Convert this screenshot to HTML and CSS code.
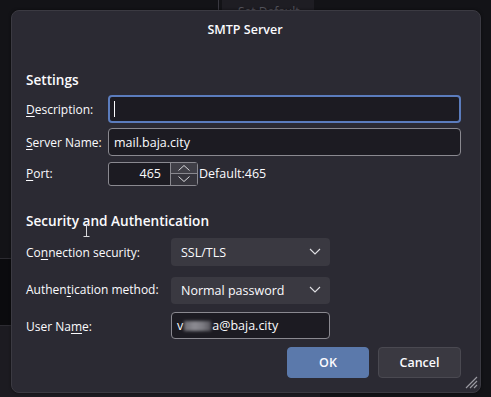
FILE: index.html
```html
<!DOCTYPE html>
<html>
<head>
<meta charset="utf-8">
<link rel="stylesheet" href="styles.css">
</head>
<body>
<div class="backdrop-text">Set Default...</div>
<div class="dialog">
  <div class="title">SMTP Server</div>
  <h2 class="heading settings-h">Settings</h2>
  <div class="grid-settings">
    <label class="lbl"><u>D</u>escription:</label>
    <div class="input focused"><span class="caret"></span></div>
    <label class="lbl"><u>S</u>erver Name:</label>
    <div class="input">mail.baja.city</div>
    <label class="lbl"><u>P</u>ort:</label>
    <div class="port-row">
      <div class="number">
        <span class="num-val">465</span>
        <span class="spin">
          <span class="spin-btn up"><svg width="14" height="8" viewBox="0 0 14 8"><path d="M1.5 6.5 L7 1.5 L12.5 6.5" fill="none" stroke="#d8d8dc" stroke-width="1"/></svg></span>
          <span class="spin-btn down"><svg width="14" height="8" viewBox="0 0 14 8"><path d="M1.5 1.5 L7 6.5 L12.5 1.5" fill="none" stroke="#d8d8dc" stroke-width="1"/></svg></span>
        </span>
      </div>
      <span class="default">Default:465</span>
    </div>
  </div>
  <h2 class="heading security-h">Security and Authentication</h2>
  <div class="grid-security">
    <label class="lbl">Co<u>n</u>nection security:</label>
    <div class="select conn">SSL/TLS<svg class="chev" width="12" height="7" viewBox="0 0 12 7"><path d="M1 1 L6 6 L11 1" fill="none" stroke="#e0e0e4" stroke-width="1.1"/></svg></div>
    <label class="lbl">Authen<u>t</u>ication method:</label>
    <div class="select auth">Normal password<svg class="chev" width="12" height="7" viewBox="0 0 12 7"><path d="M1 1 L6 6 L11 1" fill="none" stroke="#e0e0e4" stroke-width="1.1"/></svg></div>
    <label class="lbl">User Na<u>m</u>e:</label>
    <div class="input user">v<span class="blur"></span>a@baja.city</div>
  </div>
  <div class="buttons">
    <button class="btn ok">OK</button>
    <button class="btn cancel">Cancel</button>
  </div>
  <svg class="grip" width="14" height="14" viewBox="0 0 14 14"><path d="M13 2 L2 13 M13 6 L6 13 M13 10 L10 13" stroke="#9a9aa2" stroke-width="1.2"/></svg>
  <svg class="ibeam" width="7" height="13" viewBox="0 0 7 13"><path d="M0.5 0.5 H6.5 M3.5 0.5 V12.5 M0.5 12.5 H6.5" stroke="#d8d8dc" stroke-width="1" fill="none"/></svg>
</div>
</body>
</html>
```
FILE: styles.css
```css
* { box-sizing: border-box; }
html, body { margin: 0; padding: 0; }
body {
  width: 491px;
  height: 397px;
  overflow: hidden;
  position: relative;
  font-family: "Open Sans", "Noto Sans", sans-serif;
  font-size: 12px;
  color: #fbfbfe;
  background:
    linear-gradient(#3a3941, #3a3941) 218px 0 / 1px 12px no-repeat,
    linear-gradient(#1e1d23, #1e1d23) 222px 0 / 92px 12px no-repeat,
    linear-gradient(#2c2b31, #2c2b31) 0 258px / 12px 1px no-repeat,
    linear-gradient(#0b0b0e, #0b0b0e) 0 259px / 12px 66px no-repeat,
    linear-gradient(#2c2b31, #2c2b31) 0 325px / 12px 1px no-repeat,
    linear-gradient(#1c1b21, #1c1b21) 0 326px / 320px 71px no-repeat,
    #131317;
  padding: 10px 10px 0 11px;
}
.backdrop-text {
  position: absolute;
  left: 238px;
  top: 3px;
  font-size: 12px;
  color: #55545c;
}
.dialog {
  position: relative;
  width: 470px;
  height: 383px;
  background: #2b2a33;
  border: 1px solid #3b3a42;
  border-radius: 8px;
  padding: 10px 19px 0 14px;
  box-shadow: 0 0 3px rgba(0,0,0,0.5);
}
.title {
  text-align: center;
  font-weight: 600;
  font-size: 12.5px;
  line-height: 18px;
  padding-left: 3px;
}
.heading {
  margin: 0;
  font-size: 13.6px;
  font-weight: 600;
  line-height: 20px;
}
.settings-h { margin-top: 31px; }
.security-h { margin-top: 26px; }
.lbl { white-space: nowrap; }
u { text-decoration-thickness: 1px; text-underline-offset: 2px; }
.grid-settings {
  display: grid;
  grid-template-columns: 82px 1fr;
  grid-template-rows: 28px 28px 24px;
  row-gap: 5px;
  align-items: center;
  margin-top: 5px;
}
.grid-settings .port-row { margin-top: 1px; }
.input {
  height: 28px;
  background: #1c1b22;
  border: 1px solid #8a8990;
  border-radius: 4px;
  padding: 0 5px;
  display: flex;
  align-items: center;
  font-size: 12.5px;
}
.input.focused {
  border: 2px solid #5b7cbd;
  padding-left: 4px;
}
.caret {
  width: 1px;
  height: 16px;
  background: #fbfbfe;
}
.port-row {
  display: flex;
  align-items: center;
  height: 24px;
}
.number {
  width: 90px;
  height: 24px;
  border: 1px solid #8a8990;
  border-radius: 3px;
  background: #1c1b22;
  display: flex;
  align-items: stretch;
}
.num-val {
  flex: 1;
  text-align: right;
  padding-right: 9px;
  line-height: 22px;
  font-size: 12.5px;
}
.spin {
  width: 27px;
  display: flex;
  flex-direction: column;
  border-left: 1px solid #8a8990;
}
.spin-btn {
  flex: 1;
  display: flex;
  align-items: center;
  justify-content: center;
  background: #35343c;
}
.spin-btn.up { border-bottom: 1px solid #8a8990; background: #403f47; }
.default { font-size: 12.5px; margin-left: 1px; }
.grid-security {
  display: grid;
  grid-template-columns: 145px 159px;
  grid-template-rows: 28px 27px 27px;
  row-gap: 10px;
  align-items: center;
  margin-top: 7px;
}
.grid-security .lbl { font-size: 12px; }
.grid-security .auth { margin-top: 1px; }
.grid-security .user { height: 27px; margin-top: -2px; }
.select {
  height: 100%;
  background: #3a3941;
  border-radius: 4px;
  display: flex;
  align-items: center;
  padding: 0 9px 0 10px;
  font-size: 12.5px;
  position: relative;
}
.select .chev { margin-left: auto; margin-top: -1px; }
.blur {
  display: inline-block;
  width: 27px;
  height: 10px;
  margin: 0 1px;
  background: linear-gradient(90deg, #6e6d74, #8c8b92 40%, #7b7a81 70%, #56555c);
  filter: blur(1.5px);
}
.buttons {
  display: flex;
  justify-content: flex-end;
  gap: 9px;
  margin-top: 7px;
}
.btn {
  font-family: inherit;
  width: 82px;
  height: 31px;
  border-radius: 4px;
  font-size: 12.5px;
  font-weight: 600;
  color: #fbfbfe;
  border: 1px solid transparent;
}
.btn.ok { background: #5b79ab; border-color: #5b79ab; }
.btn.cancel { width: 83px; background: #3a3941; border-color: #4a4951; }
.grip {
  position: absolute;
  right: 2px;
  bottom: 3px;
}
.ibeam {
  position: absolute;
  left: 71px;
  top: 213px;
}
```
